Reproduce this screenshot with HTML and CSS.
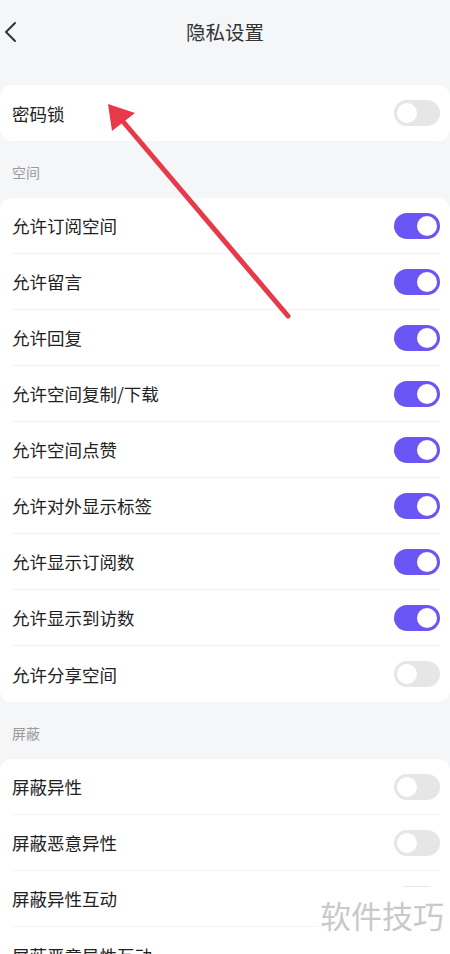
FILE: index.html
```html
<!DOCTYPE html>
<html lang="zh">
<head>
    <meta charset="UTF-8">
    <meta name="viewport" content="width=device-width, initial-scale=1.0">
    <title>隐私设置</title>
    <link rel="stylesheet" href="styles.css">
</head>
<body>
    <div class="page">
        <!-- 顶部导航 -->
        <div class="header">
            <svg class="back" width="16" height="24" viewBox="0 0 16 24">
                <path d="M13 3 L4 12 L13 21" fill="none" stroke="#333" stroke-width="2" stroke-linecap="round" stroke-linejoin="round"/>
            </svg>
            <div class="title">隐私设置</div>
        </div>

        <div class="card first">
            <div class="row"><span>密码锁</span><span class="switch"></span></div>
        </div>

        <div class="section">空间</div>
        <div class="card">
            <div class="row"><span>允许订阅空间</span><span class="switch on"></span></div>
            <div class="row"><span>允许留言</span><span class="switch on"></span></div>
            <div class="row"><span>允许回复</span><span class="switch on"></span></div>
            <div class="row"><span>允许空间复制/下载</span><span class="switch on"></span></div>
            <div class="row"><span>允许空间点赞</span><span class="switch on"></span></div>
            <div class="row"><span>允许对外显示标签</span><span class="switch on"></span></div>
            <div class="row"><span>允许显示订阅数</span><span class="switch on"></span></div>
            <div class="row"><span>允许显示到访数</span><span class="switch on"></span></div>
            <div class="row"><span>允许分享空间</span><span class="switch"></span></div>
        </div>

        <div class="section">屏蔽</div>
        <div class="card">
            <div class="row"><span>屏蔽异性</span><span class="switch"></span></div>
            <div class="row"><span>屏蔽恶意异性</span><span class="switch"></span></div>
            <div class="row"><span>屏蔽异性互动</span><span class="switch"></span></div>
            <div class="row"><span>屏蔽恶意异性互动</span><span class="switch"></span></div>
        </div>

        <!-- 标注箭头 -->
        <svg class="arrow" width="450" height="954" viewBox="0 0 450 954">
            <line x1="288" y1="316" x2="120" y2="118" stroke="#e8394a" stroke-width="5" stroke-linecap="round"/>
            <polygon points="108,104 135,113 112,131" fill="#e8394a"/>
        </svg>

        <div class="watermark">软件技巧</div>
    </div>
</body>
</html>
```

FILE: styles.css
```css
body {
    margin: 0;
    padding: 0;
    background-color: #f5f6f8;
    font-family: "Noto Sans CJK SC", "Noto Sans", sans-serif;
    color: #222;
}

.page {
    position: relative;
    height: 954px;
    overflow: hidden;
}

.header {
    position: relative;
    height: 63px;
    display: flex;
    align-items: center;
    justify-content: center;
}

.back {
    position: absolute;
    left: 2px;
    top: 20px;
}

.title {
    font-size: 19.5px;
    color: #333;
}

.card {
    background-color: #fff;
    border-radius: 12px;
}

.card.first {
    margin-top: 22px;
}

.row {
    height: 56px;
    margin: 0 10px 0 12px;
    display: flex;
    align-items: center;
    justify-content: space-between;
    font-size: 17.5px;
    border-bottom: 1px solid #f3f3f3;
    box-sizing: border-box;
}

.row:last-child {
    border-bottom: none;
}

.section {
    padding: 21px 12px 16px;
    line-height: 20px;
    font-size: 14px;
    color: #9a9a9a;
}

.switch {
    position: relative;
    width: 46px;
    height: 26px;
    border-radius: 13px;
    background-color: #e6e6e6;
}

.switch::after {
    content: "";
    position: absolute;
    top: 3px;
    left: 3px;
    width: 20px;
    height: 20px;
    border-radius: 50%;
    background-color: #fff;
}

.switch.on {
    background-color: #6a55f5;
}

.switch.on::after {
    left: 23px;
}

.arrow {
    position: absolute;
    left: 0;
    top: 0;
    pointer-events: none;
}

.watermark {
    position: absolute;
    left: 318px;
    top: 887px;
    width: 132px;
    height: 67px;
    padding-left: 2px;
    box-sizing: border-box;
    background-color: #fff;
    color: #c9c9c9;
    font-size: 31px;
    line-height: 56px;
}
```
